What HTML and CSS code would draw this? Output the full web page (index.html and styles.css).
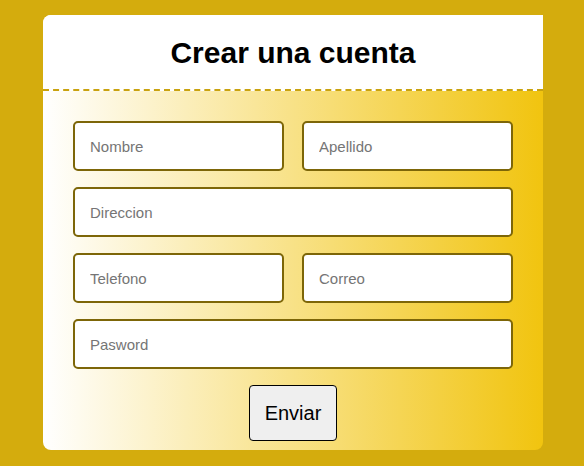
FILE: index.html
```html
<!DOCTYPE html>
<html>
<head>
<meta charset="utf-8">
<link rel="stylesheet" href="styles.css">
</head>
<body>
<div class="card">
  <div class="header"><h1>Crear una cuenta</h1></div>
  <form class="form">
    <div class="row">
      <input type="text" placeholder="Nombre">
      <input type="text" placeholder="Apellido">
    </div>
    <div class="row">
      <input type="text" placeholder="Direccion">
    </div>
    <div class="row">
      <input type="text" placeholder="Telefono">
      <input type="text" placeholder="Correo">
    </div>
    <div class="row">
      <input type="password" placeholder="Pasword">
    </div>
    <div class="actions">
      <button type="button">Enviar</button>
    </div>
  </form>
</div>
</body>
</html>
```
FILE: styles.css
```css
html, body {
  margin: 0;
  padding: 0;
}
body {
  background: #d4ac0d;
  font-family: "Liberation Sans", Arial, sans-serif;
  padding-top: 15px;
  height: 466px;
  box-sizing: border-box;
}
.card {
  width: 500px;
  margin: 0 0 0 43px;
  border-radius: 8px 0 8px 8px;
  overflow: hidden;
  background: linear-gradient(to right, #ffffff 0%, #f1c40f 100%);
}
.header {
  background: #ffffff;
  height: 74px;
  border-bottom: 2px dashed #c9a20f;
  display: flex;
  align-items: center;
  justify-content: center;
}
.header h1 {
  margin: 0;
  font-size: 30px;
  font-weight: bold;
  color: #000;
  padding-top: 1px;
}
.form {
  padding: 30px 30px 9px;
  display: flex;
  flex-direction: column;
  gap: 16px;
}
.row {
  display: flex;
  gap: 18px;
}
.row input {
  flex: 1;
  min-width: 0;
  height: 50px;
  box-sizing: border-box;
  border: 2px solid #7d6608;
  border-radius: 5px;
  padding: 0 15px;
  font-family: "Liberation Sans", Arial, sans-serif;
  font-size: 15px;
  background: #fff;
  outline: none;
}
.row input::placeholder {
  color: #757575;
}
.actions {
  display: flex;
  justify-content: center;
}
.actions button {
  width: 88px;
  height: 56px;
  background: #efefef;
  border: 1px solid #000;
  border-radius: 4px;
  font-family: "Liberation Sans", Arial, sans-serif;
  font-size: 20px;
  color: #000;
  padding: 0;
}
```
